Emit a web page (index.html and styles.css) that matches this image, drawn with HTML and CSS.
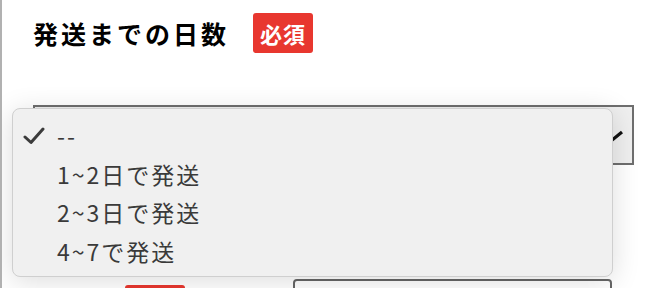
FILE: index.html
```html
<!DOCTYPE html>
<html lang="ja">

<head>
    <meta charset="UTF-8">
    <meta name="viewport" content="width=device-width, initial-scale=1.0">
    <title>発送までの日数</title>
    <link rel="stylesheet" href="styles.css">
</head>

<body>
    <div class="page">
        <div class="field">
            <div class="field-head">
                <span class="field-title">発送までの日数</span>
                <span class="badge">必須</span>
            </div>
            <div class="select">
                <svg class="select-arrow" width="26" height="14" viewBox="0 0 26 14">
                    <polyline points="2,2 13,11 24,2" fill="none" stroke="#111" stroke-width="3.2" />
                </svg>
            </div>

            <ul class="menu">
                <li class="selected">
                    <svg class="check" width="22" height="18" viewBox="0 0 22 18">
                        <polyline points="2,10 8,15.5 20,2" fill="none" stroke="#3b3b3b" stroke-width="3" stroke-linecap="round" stroke-linejoin="round" />
                    </svg>
                    --
                </li>
                <li>1~2日で発送</li>
                <li>2~3日で発送</li>
                <li>4~7で発送</li>
            </ul>
        </div>

        <div class="field-row">
            <span class="badge next-badge">必須</span>
            <div class="input"></div>
        </div>
    </div>
</body>

</html>
```

FILE: styles.css
```css
body {
    margin: 0;
    background-color: #fff;
    font-family: "Noto Sans CJK JP", "Noto Sans", sans-serif;
    overflow: hidden;
}

.page {
    border-left: 2px solid #b1b1b1;
    height: 288px;
    box-sizing: border-box;
    padding-left: 31px;
    overflow: hidden;
}

.field {
    position: relative;
}

.field-head {
    display: flex;
    align-items: center;
    padding-top: 13px;
    height: 40px;
}

.field-title {
    font-size: 25px;
    font-weight: bold;
    letter-spacing: 3px;
    color: #000;
    width: 220px;
}

.badge {
    display: inline-block;
    background-color: #e8372f;
    color: #fff;
    font-size: 22px;
    font-weight: bold;
    letter-spacing: 1px;
    width: 60px;
    height: 40px;
    line-height: 40px;
    text-align: center;
    border-radius: 3px;
}

.select {
    margin-top: 52px;
    width: 601px;
    height: 60px;
    box-sizing: border-box;
    border: 2px solid #6e6e6e;
    background-color: #efefef;
    display: flex;
    align-items: center;
    justify-content: flex-end;
    padding-right: 8px;
}

.select-arrow {
    margin-top: 3px;
}

/* dropdown popup */
.menu {
    position: absolute;
    left: -21px;
    top: 108px;
    width: 601px;
    height: 169px;
    box-sizing: border-box;
    margin: 0;
    padding: 7px 0 8px;
    list-style: none;
    background-color: #f0f0f0;
    border: 1px solid #cfcfcf;
    border-radius: 8px;
    box-shadow: 0 4px 28px rgba(0, 0, 0, 0.14);
}

.menu li {
    position: relative;
    height: 38.5px;
    line-height: 38.5px;
    padding-left: 44px;
    font-size: 23px;
    letter-spacing: 2px;
    color: #3a3a3a;
}

.check {
    position: absolute;
    left: 10px;
    top: 11px;
}

.field-row {
    display: flex;
    align-items: flex-start;
    margin-top: 114px;
}

.next-badge {
    margin-left: 92px;
    margin-top: 6px;
}

.input {
    margin-left: 108px;
    width: 319px;
    height: 40px;
    box-sizing: border-box;
    border: 2px solid #666;
    border-radius: 4px;
}
```
